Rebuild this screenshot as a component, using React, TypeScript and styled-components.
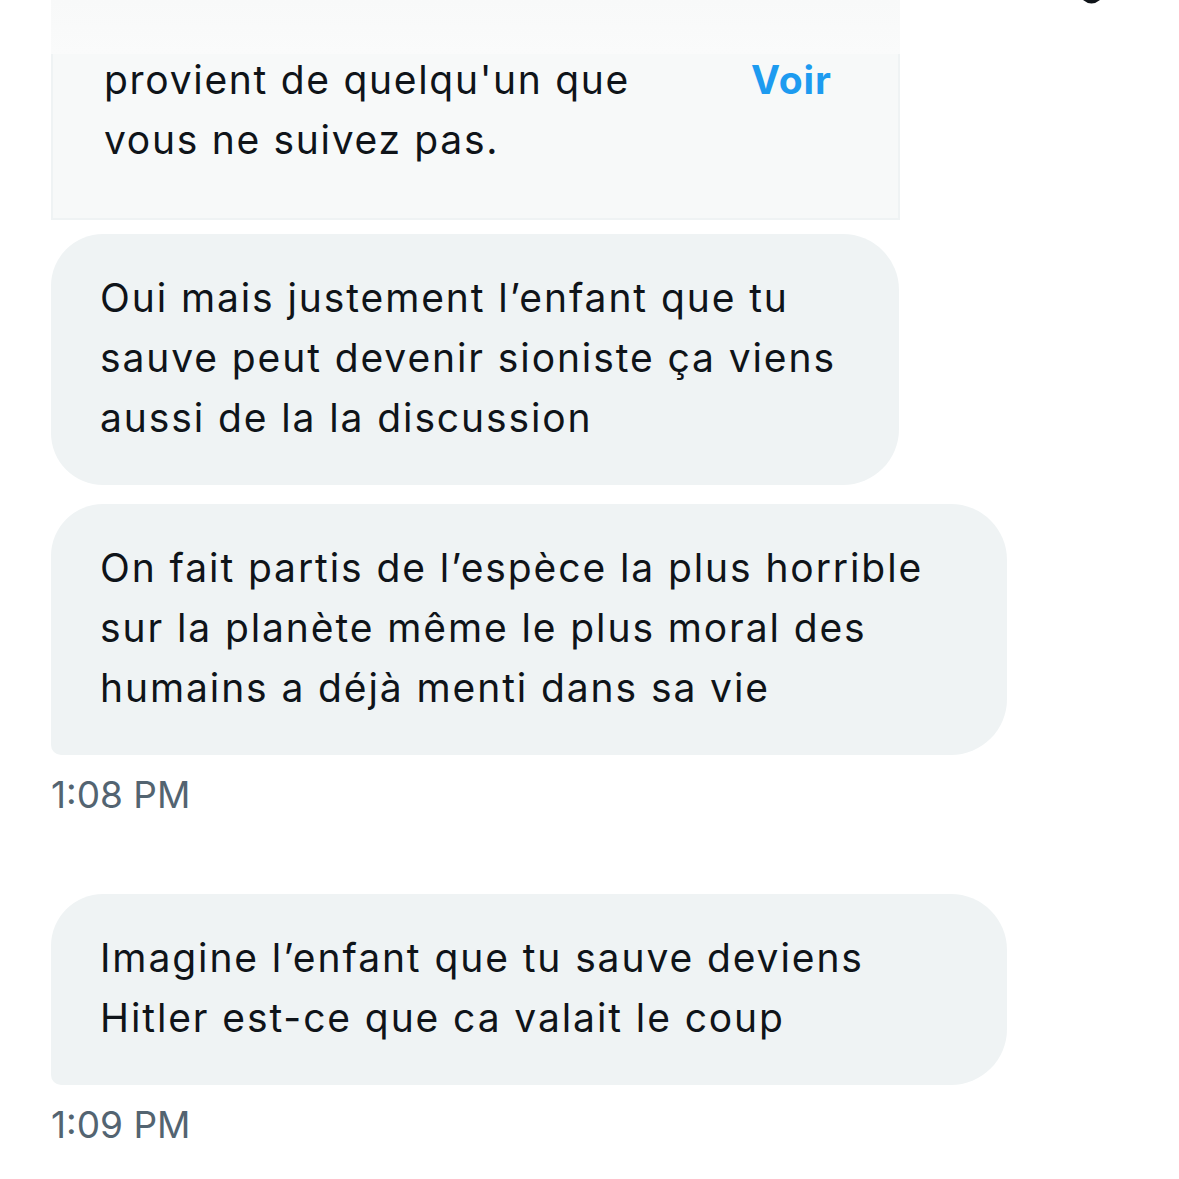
import React from 'react'
import styled, { createGlobalStyle } from 'styled-components'

const GlobalStyle = createGlobalStyle`
    html, body {
        margin: 0;
        padding: 0;
        background: #fff;
    }

    body {
        font-family: Inter, "Noto Sans", "DejaVu Sans", sans-serif;
        color: #0f1419;
        -webkit-font-smoothing: antialiased;
    }
`

type Message = {
    lines: string[]
    width: number
    gap: number
    tail?: boolean
    time?: string
}

const messages: Message[] = [
    {
        lines: ['Oui mais justement l’enfant que tu', 'sauve peut devenir sioniste ça viens', 'aussi de la la discussion'],
        width: 848,
        gap: 14,
    },
    {
        lines: ['On fait partis de l’espèce la plus horrible', 'sur la planète même le plus moral des', 'humains a déjà menti dans sa vie'],
        width: 956,
        gap: 19,
        tail: true,
        time: '1:08 PM',
    },
    {
        lines: ['Imagine l’enfant que tu sauve deviens', 'Hitler est-ce que ca valait le coup'],
        width: 956,
        gap: 69,
        tail: true,
        time: '1:09 PM',
    },
]

export default function App() {
    return (
        <Page>
            <GlobalStyle />
            <Header>
                <Fade />
                <CornerIcon width="17" height="5" viewBox="0 0 17 5">
                    <path d="M0 0 Q8.5 7 17 0 Z" fill="#0f1419" />
                </CornerIcon>
            </Header>
            <Thread>
                <Notice>
                    <NoticeText>
                        provient de quelqu'un que<br />
                        vous ne suivez pas.
                    </NoticeText>
                    <SeeLink>Voir</SeeLink>
                </Notice>
                {messages.map((m, i) => (
                    <Group key={i} $gap={m.gap}>
                        <Bubble $width={m.width} $tail={!!m.tail}>
                            {m.lines.map((l, j) => (
                                <span key={j}>{l}</span>
                            ))}
                        </Bubble>
                        {m.time && <Time>{m.time}</Time>}
                    </Group>
                ))}
            </Thread>
        </Page>
    )
}

const Page = styled.div`
    width: 1179px;
    height: 1179px;
    overflow: hidden;
    background: #fff;
`

const Header = styled.div`
    height: 54px;
    display: flex;
    align-items: flex-start;
    padding-left: 51px;
    padding-right: 79px;
`

const Fade = styled.div`
    width: 849px;
    height: 100%;
    background: linear-gradient(180deg, #f8f9f9 0%, #fafbfb 100%);
`

const CornerIcon = styled.svg`
    margin-left: auto;
    display: block;
`

const Thread = styled.div`
    display: flex;
    flex-direction: column;
    align-items: flex-start;
    padding-left: 51px;
`

const Notice = styled.div`
    width: 849px;
    height: 166px;
    box-sizing: border-box;
    display: flex;
    justify-content: space-between;
    align-items: flex-start;
    padding: 0 66px 0 51px;
    background: #f7f9f9;
    border: 2px solid #eff3f4;
    border-top: none;
    font-size: 39px;
    line-height: 60px;
    letter-spacing: 1.7px;
    overflow: hidden;
`

const NoticeText = styled.div`
    margin-top: -4px;
    white-space: nowrap;
`

const SeeLink = styled.a`
    margin-top: -4px;
    color: #1d9bf0;
    font-weight: 700;
    letter-spacing: 1px;
    cursor: pointer;
`

const Group = styled.div<{ $gap: number }>`
    display: flex;
    flex-direction: column;
    align-items: flex-start;
    margin-top: ${p => p.$gap}px;
`

const Bubble = styled.div<{ $width: number; $tail: boolean }>`
    width: ${p => p.$width}px;
    box-sizing: border-box;
    display: flex;
    flex-direction: column;
    padding: 34px 20px 37px 49px;
    background: #eff3f4;
    border-radius: 52px 56px 56px ${p => (p.$tail ? '10px' : '52px')};
    font-size: 39px;
    line-height: 60px;
    letter-spacing: 1.9px;
    white-space: nowrap;
`

const Time = styled.div`
    margin-top: 10px;
    font-size: 37px;
    line-height: 60px;
    color: #536471;
`
